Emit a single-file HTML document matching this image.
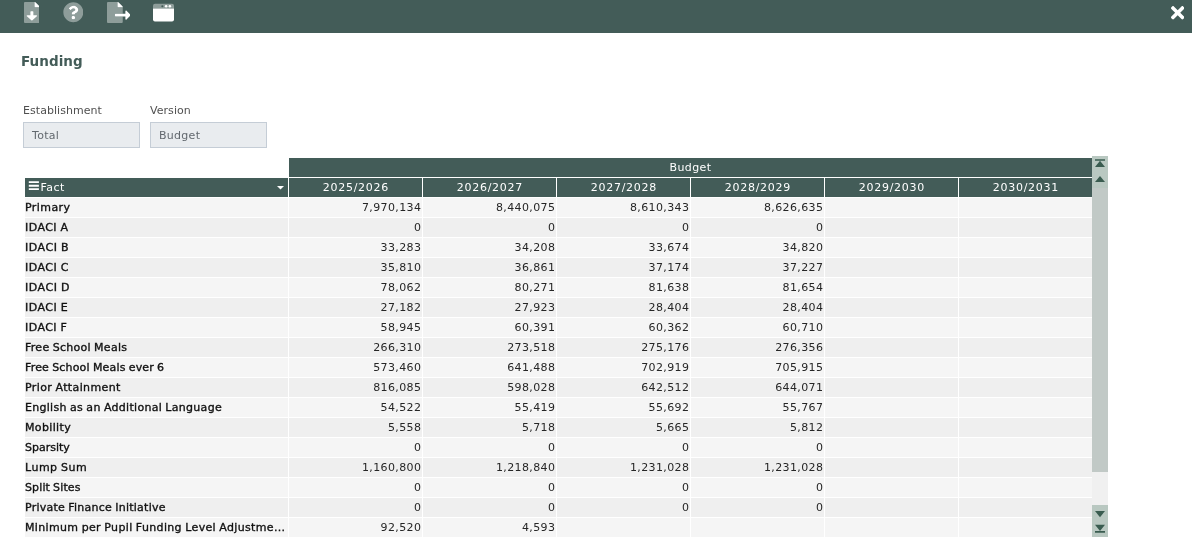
<!DOCTYPE html><html><head><meta charset="utf-8"><title>Funding</title><style>
*{box-sizing:border-box;margin:0;padding:0}
html,body{width:1192px;height:546px;overflow:hidden;background:#fff;}
#wrap{position:absolute;left:0;top:0;width:1192px;height:546px;will-change:transform;font-family:"DejaVu Sans","Liberation Sans",sans-serif;}
#top{position:absolute;left:0;top:0;width:1192px;height:33px;background:#435c58;}
#top svg{position:absolute;}
h1{position:absolute;left:21px;top:52px;font-size:13.5px;font-weight:bold;color:#435c58;line-height:18px;letter-spacing:0.05px}
.lbl{position:absolute;top:104px;font-size:11px;color:#505050;line-height:14px;letter-spacing:0.05px}
.inp{position:absolute;top:122px;width:117px;height:26px;background:#e9ecef;border:1px solid #c5cdd6;font-size:11px;color:#62686e;line-height:24px;padding-left:8px;padding-top:0.8px;letter-spacing:0.28px}
.c{position:absolute;height:19px;line-height:19px;font-size:11px;white-space:nowrap;overflow:hidden}
.h{background:#435c58;color:#fff;text-align:center;font-size:11px}
.y{letter-spacing:0.7px;padding-left:0.7px}
.r0{background:#f5f5f5}
.r1{background:#efefef}
.n{text-align:right;padding-right:0.7px;color:#262626;letter-spacing:0.38px}
.f{left:25px;width:263px;color:#111;letter-spacing:0.28px;word-spacing:-0.5px;-webkit-text-stroke:0.35px #111}
#sb{position:absolute;left:1092px;top:156px;width:16px;height:381px;background:#f0f0f0}
</style></head><body><div id="wrap">
<div id="top"><svg style="left:23.7px;top:2px" width="15.75" height="21" viewBox="0 0 384 512"><path fill="#fff" fill-opacity=".4" d="M384 128H272a16 16 0 0 1-16-16V0H24A23.94 23.94 0 0 0 0 23.88V488a23.94 23.94 0 0 0 23.88 24H360a23.94 23.94 0 0 0 24-23.88V128z"/><path fill="#fff" d="M377 105L279.100 7a24 24 0 0 0-17-7H256v112a16 16 0 0 0 16 16h112v-6.100a23.900 23.900 0 0 0-7-16.900zM303 320H228v-80a16 16 0 0 0-16-16h-40a16 16 0 0 0-16 16v80H81c-14.280 0-21.420 17.290-11.270 27.360l109.590 95.070a18 18 0 0 0 25.380 0l109.570-95.070c10.150-10.070 3.010-27.360-11.270-27.360z"/></svg>
<svg style="left:62.68px;top:2.45px" width="20.65" height="20.65" viewBox="0 0 512 512"><path fill="#fff" fill-opacity=".4" fill-rule="evenodd" d="M256 8C119 8 8 119.080 8 256s111 248 248 248 248-111 248-248S393 8 256 8zm0 422a46 46 0 1 1 46-46 46.050 46.050 0 0 1-46 46zm40-131.330V300a12 12 0 0 1-12 12h-56a12 12 0 0 1-12-12v-4c0-41.060 31.130-57.470 54.650-70.660 20.170-11.310 32.540-19 32.540-34 0-19.820-25.270-33-45.700-33-27.190 0-39.440 13.140-57.300 35.790a12 12 0 0 1-16.670 2.130L148.820 170a12 12 0 0 1-2.710-16.260C173.400 113 208.160 90 262.660 90c56.340 0 116.530 44 116.530 102 0 77-83.190 78.210-83.190 106.670z"/><path fill="#fff" d="M256 338a46 46 0 1 0 46 46 46 46 0 0 0-46-46zm6.660-248c-54.500 0-89.260 23-116.550 63.760a12 12 0 0 0 2.710 16.240l34.700 26.310a12 12 0 0 0 16.670-2.130c17.860-22.650 30.110-35.790 57.300-35.790 20.430 0 45.700 13.140 45.700 33 0 15-12.370 22.660-32.540 34C247.130 238.530 216 254.940 216 296v4a12 12 0 0 0 12 12h56a12 12 0 0 0 12-12v-1.330c0-28.460 83.190-29.670 83.190-106.670 0-58-60.190-102-116.530-102z"/></svg>
<svg style="left:106.6px;top:2px" width="23.625" height="21" viewBox="0 0 576 512"><path fill="#fff" fill-opacity=".4" d="M384 128H272a16 16 0 0 1-16-16V0H24A23.940 23.940 0 0 0 0 23.880V488a23.940 23.940 0 0 0 23.880 24H360a23.940 23.940 0 0 0 24-23.880V352H208a16 16 0 0 1-16-16v-32a16 16 0 0 1 16-16h176z"/><path fill="#fff" d="M377 105L279.100 7a24 24 0 0 0-17-7H256v112a16 16 0 0 0 16 16h112v-6.100a23.900 23.900 0 0 0-7-16.900zM571 308l-95.700-96.400c-10.100-10.100-27.400-3-27.400 11.300V288H208a16 16 0 0 0-16 16v32a16 16 0 0 0 16 16h239.900v65.200c0 14.300 17.300 21.400 27.400 11.300L571 332c6.600-6.600 6.600-17.400 0-24z"/></svg>
<svg style="left:153px;top:2px" width="21" height="21" viewBox="0 0 512 512"><path fill="#fff" fill-opacity=".4" d="M48 42h416a48 48 0 0 1 48 48v70H0V90a48 48 0 0 1 48-48z"/><path fill="#fff" d="M0 160h512v266a48 48 0 0 1-48 48H48a48 48 0 0 1-48-48z"/><circle cx="228" cy="104" r="26" fill="#435c58"/><circle cx="320" cy="104" r="31" fill="#fff"/><circle cx="412" cy="104" r="31" fill="#fff"/></svg>
<svg style="left:1171px;top:2.72px" width="13.4" height="19.5" viewBox="0 0 352 512"><path fill="#fff" d="M242.720 256l100.070-100.070c12.280-12.280 12.280-32.190 0-44.480l-22.240-22.240c-12.280-12.280-32.190-12.280-44.480 0L176 189.280 75.930 89.210c-12.280-12.280-32.190-12.280-44.480 0L9.210 111.450c-12.280 12.280-12.280 32.190 0 44.480L109.280 256 9.210 356.070c-12.280 12.280-12.280 32.190 0 44.480l22.240 22.240c12.280 12.280 32.200 12.280 44.480 0L176 322.720l100.070 100.070c12.280 12.280 32.200 12.280 44.480 0l22.240-22.240c12.280-12.280 12.280-32.190 0-44.480L242.720 256z"/></svg>
</div>
<h1>Funding</h1>
<div class="lbl" style="left:23px">Establishment</div><div class="lbl" style="left:150px">Version</div>
<div class="inp" style="left:23px">Total</div><div class="inp" style="left:150px">Budget</div>
<div class="c h" style="left:289px;top:158px;width:803px;letter-spacing:0.4px">Budget</div>
<div class="c h" style="left:25px;top:178px;width:263px;text-align:left;padding-left:15.6px;letter-spacing:0.45px">Fact</div>
<svg style="position:absolute;left:27.5px;top:181px" width="11" height="10" viewBox="0 0 11 10"><path fill="#fff" d="M0.800 0.300h10.100v1.800H0.800zM0.800 3.800h10.100v1.900H0.800zM0.800 7.300h10.100v1.800H0.800z"/></svg>
<svg style="position:absolute;left:277px;top:186px" width="7" height="4" viewBox="0 0 7 4"><path fill="#fff" d="M0 0h7L3.500 3.600z"/></svg>

<div class="c h y" style="left:289px;top:178px;width:133px">2025/2026</div>
<div class="c h y" style="left:423px;top:178px;width:133px">2026/2027</div>
<div class="c h y" style="left:557px;top:178px;width:133px">2027/2028</div>
<div class="c h y" style="left:691px;top:178px;width:133px">2028/2029</div>
<div class="c h y" style="left:825px;top:178px;width:133px">2029/2030</div>
<div class="c h y" style="left:959px;top:178px;width:133px">2030/2031</div>
<div class="c f r0" style="top:198px;letter-spacing:0.43px">Primary</div>
<div class="c n r0" style="left:289px;top:198px;width:133px">7,970,134</div>
<div class="c n r0" style="left:423px;top:198px;width:133px">8,440,075</div>
<div class="c n r0" style="left:557px;top:198px;width:133px">8,610,343</div>
<div class="c n r0" style="left:691px;top:198px;width:133px">8,626,635</div>
<div class="c n r0" style="left:825px;top:198px;width:133px"></div>
<div class="c n r0" style="left:959px;top:198px;width:133px"></div>
<div class="c f r1" style="top:218px;letter-spacing:0.46px">IDACI A</div>
<div class="c n r1" style="left:289px;top:218px;width:133px">0</div>
<div class="c n r1" style="left:423px;top:218px;width:133px">0</div>
<div class="c n r1" style="left:557px;top:218px;width:133px">0</div>
<div class="c n r1" style="left:691px;top:218px;width:133px">0</div>
<div class="c n r1" style="left:825px;top:218px;width:133px"></div>
<div class="c n r1" style="left:959px;top:218px;width:133px"></div>
<div class="c f r0" style="top:238px;letter-spacing:0.55px">IDACI B</div>
<div class="c n r0" style="left:289px;top:238px;width:133px">33,283</div>
<div class="c n r0" style="left:423px;top:238px;width:133px">34,208</div>
<div class="c n r0" style="left:557px;top:238px;width:133px">33,674</div>
<div class="c n r0" style="left:691px;top:238px;width:133px">34,820</div>
<div class="c n r0" style="left:825px;top:238px;width:133px"></div>
<div class="c n r0" style="left:959px;top:238px;width:133px"></div>
<div class="c f r1" style="top:258px;letter-spacing:0.48px">IDACI C</div>
<div class="c n r1" style="left:289px;top:258px;width:133px">35,810</div>
<div class="c n r1" style="left:423px;top:258px;width:133px">36,861</div>
<div class="c n r1" style="left:557px;top:258px;width:133px">37,174</div>
<div class="c n r1" style="left:691px;top:258px;width:133px">37,227</div>
<div class="c n r1" style="left:825px;top:258px;width:133px"></div>
<div class="c n r1" style="left:959px;top:258px;width:133px"></div>
<div class="c f r0" style="top:278px;letter-spacing:0.53px">IDACI D</div>
<div class="c n r0" style="left:289px;top:278px;width:133px">78,062</div>
<div class="c n r0" style="left:423px;top:278px;width:133px">80,271</div>
<div class="c n r0" style="left:557px;top:278px;width:133px">81,638</div>
<div class="c n r0" style="left:691px;top:278px;width:133px">81,654</div>
<div class="c n r0" style="left:825px;top:278px;width:133px"></div>
<div class="c n r0" style="left:959px;top:278px;width:133px"></div>
<div class="c f r1" style="top:298px;letter-spacing:0.48px">IDACI E</div>
<div class="c n r1" style="left:289px;top:298px;width:133px">27,182</div>
<div class="c n r1" style="left:423px;top:298px;width:133px">27,923</div>
<div class="c n r1" style="left:557px;top:298px;width:133px">28,404</div>
<div class="c n r1" style="left:691px;top:298px;width:133px">28,404</div>
<div class="c n r1" style="left:825px;top:298px;width:133px"></div>
<div class="c n r1" style="left:959px;top:298px;width:133px"></div>
<div class="c f r0" style="top:318px;letter-spacing:0.45px">IDACI F</div>
<div class="c n r0" style="left:289px;top:318px;width:133px">58,945</div>
<div class="c n r0" style="left:423px;top:318px;width:133px">60,391</div>
<div class="c n r0" style="left:557px;top:318px;width:133px">60,362</div>
<div class="c n r0" style="left:691px;top:318px;width:133px">60,710</div>
<div class="c n r0" style="left:825px;top:318px;width:133px"></div>
<div class="c n r0" style="left:959px;top:318px;width:133px"></div>
<div class="c f r1" style="top:338px;letter-spacing:0.27px">Free School Meals</div>
<div class="c n r1" style="left:289px;top:338px;width:133px">266,310</div>
<div class="c n r1" style="left:423px;top:338px;width:133px">273,518</div>
<div class="c n r1" style="left:557px;top:338px;width:133px">275,176</div>
<div class="c n r1" style="left:691px;top:338px;width:133px">276,356</div>
<div class="c n r1" style="left:825px;top:338px;width:133px"></div>
<div class="c n r1" style="left:959px;top:338px;width:133px"></div>
<div class="c f r0" style="top:358px;letter-spacing:0.17px">Free School Meals ever 6</div>
<div class="c n r0" style="left:289px;top:358px;width:133px">573,460</div>
<div class="c n r0" style="left:423px;top:358px;width:133px">641,488</div>
<div class="c n r0" style="left:557px;top:358px;width:133px">702,919</div>
<div class="c n r0" style="left:691px;top:358px;width:133px">705,915</div>
<div class="c n r0" style="left:825px;top:358px;width:133px"></div>
<div class="c n r0" style="left:959px;top:358px;width:133px"></div>
<div class="c f r1" style="top:378px;letter-spacing:0.37px">Prior Attainment</div>
<div class="c n r1" style="left:289px;top:378px;width:133px">816,085</div>
<div class="c n r1" style="left:423px;top:378px;width:133px">598,028</div>
<div class="c n r1" style="left:557px;top:378px;width:133px">642,512</div>
<div class="c n r1" style="left:691px;top:378px;width:133px">644,071</div>
<div class="c n r1" style="left:825px;top:378px;width:133px"></div>
<div class="c n r1" style="left:959px;top:378px;width:133px"></div>
<div class="c f r0" style="top:398px;letter-spacing:0.29px">English as an Additional Language</div>
<div class="c n r0" style="left:289px;top:398px;width:133px">54,522</div>
<div class="c n r0" style="left:423px;top:398px;width:133px">55,419</div>
<div class="c n r0" style="left:557px;top:398px;width:133px">55,692</div>
<div class="c n r0" style="left:691px;top:398px;width:133px">55,767</div>
<div class="c n r0" style="left:825px;top:398px;width:133px"></div>
<div class="c n r0" style="left:959px;top:398px;width:133px"></div>
<div class="c f r1" style="top:418px;letter-spacing:0.35px">Mobility</div>
<div class="c n r1" style="left:289px;top:418px;width:133px">5,558</div>
<div class="c n r1" style="left:423px;top:418px;width:133px">5,718</div>
<div class="c n r1" style="left:557px;top:418px;width:133px">5,665</div>
<div class="c n r1" style="left:691px;top:418px;width:133px">5,812</div>
<div class="c n r1" style="left:825px;top:418px;width:133px"></div>
<div class="c n r1" style="left:959px;top:418px;width:133px"></div>
<div class="c f r0" style="top:438px;letter-spacing:0.00px">Sparsity</div>
<div class="c n r0" style="left:289px;top:438px;width:133px">0</div>
<div class="c n r0" style="left:423px;top:438px;width:133px">0</div>
<div class="c n r0" style="left:557px;top:438px;width:133px">0</div>
<div class="c n r0" style="left:691px;top:438px;width:133px">0</div>
<div class="c n r0" style="left:825px;top:438px;width:133px"></div>
<div class="c n r0" style="left:959px;top:438px;width:133px"></div>
<div class="c f r1" style="top:458px;letter-spacing:0.49px">Lump Sum</div>
<div class="c n r1" style="left:289px;top:458px;width:133px">1,160,800</div>
<div class="c n r1" style="left:423px;top:458px;width:133px">1,218,840</div>
<div class="c n r1" style="left:557px;top:458px;width:133px">1,231,028</div>
<div class="c n r1" style="left:691px;top:458px;width:133px">1,231,028</div>
<div class="c n r1" style="left:825px;top:458px;width:133px"></div>
<div class="c n r1" style="left:959px;top:458px;width:133px"></div>
<div class="c f r0" style="top:478px;letter-spacing:0.12px">Split Sites</div>
<div class="c n r0" style="left:289px;top:478px;width:133px">0</div>
<div class="c n r0" style="left:423px;top:478px;width:133px">0</div>
<div class="c n r0" style="left:557px;top:478px;width:133px">0</div>
<div class="c n r0" style="left:691px;top:478px;width:133px">0</div>
<div class="c n r0" style="left:825px;top:478px;width:133px"></div>
<div class="c n r0" style="left:959px;top:478px;width:133px"></div>
<div class="c f r1" style="top:498px;letter-spacing:0.24px">Private Finance Initiative</div>
<div class="c n r1" style="left:289px;top:498px;width:133px">0</div>
<div class="c n r1" style="left:423px;top:498px;width:133px">0</div>
<div class="c n r1" style="left:557px;top:498px;width:133px">0</div>
<div class="c n r1" style="left:691px;top:498px;width:133px">0</div>
<div class="c n r1" style="left:825px;top:498px;width:133px"></div>
<div class="c n r1" style="left:959px;top:498px;width:133px"></div>
<div class="c f r0" style="top:518px;letter-spacing:0.34px">Minimum per Pupil Funding Level Adjustme...</div>
<div class="c n r0" style="left:289px;top:518px;width:133px">92,520</div>
<div class="c n r0" style="left:423px;top:518px;width:133px">4,593</div>
<div class="c n r0" style="left:557px;top:518px;width:133px"></div>
<div class="c n r0" style="left:691px;top:518px;width:133px"></div>
<div class="c n r0" style="left:825px;top:518px;width:133px"></div>
<div class="c n r0" style="left:959px;top:518px;width:133px"></div>
<div id="sb"><div style="position:absolute;left:0;top:0;width:16px;height:32px;background:#b9c8c1"></div><div style="position:absolute;left:0;top:32px;width:16px;height:284px;background:#c1c9c6"></div><div style="position:absolute;left:0;top:349px;width:16px;height:32px;background:#b9c8c1"></div><svg style="position:absolute;left:0;top:0" width="16" height="381" viewBox="0 0 16 381"><g fill="#3a5c50"><path d="M3 3.200h10v1.500H3zM8 4.800l5 6.200H3z"/><path d="M8 19.900l5 6.200H3z"/><path d="M3 355h10l-5 6.200z"/><path d="M3 368.800h10l-5 6.200zM3 375h10v1.700H3z"/></g></svg>
</div>
</div></body></html>
